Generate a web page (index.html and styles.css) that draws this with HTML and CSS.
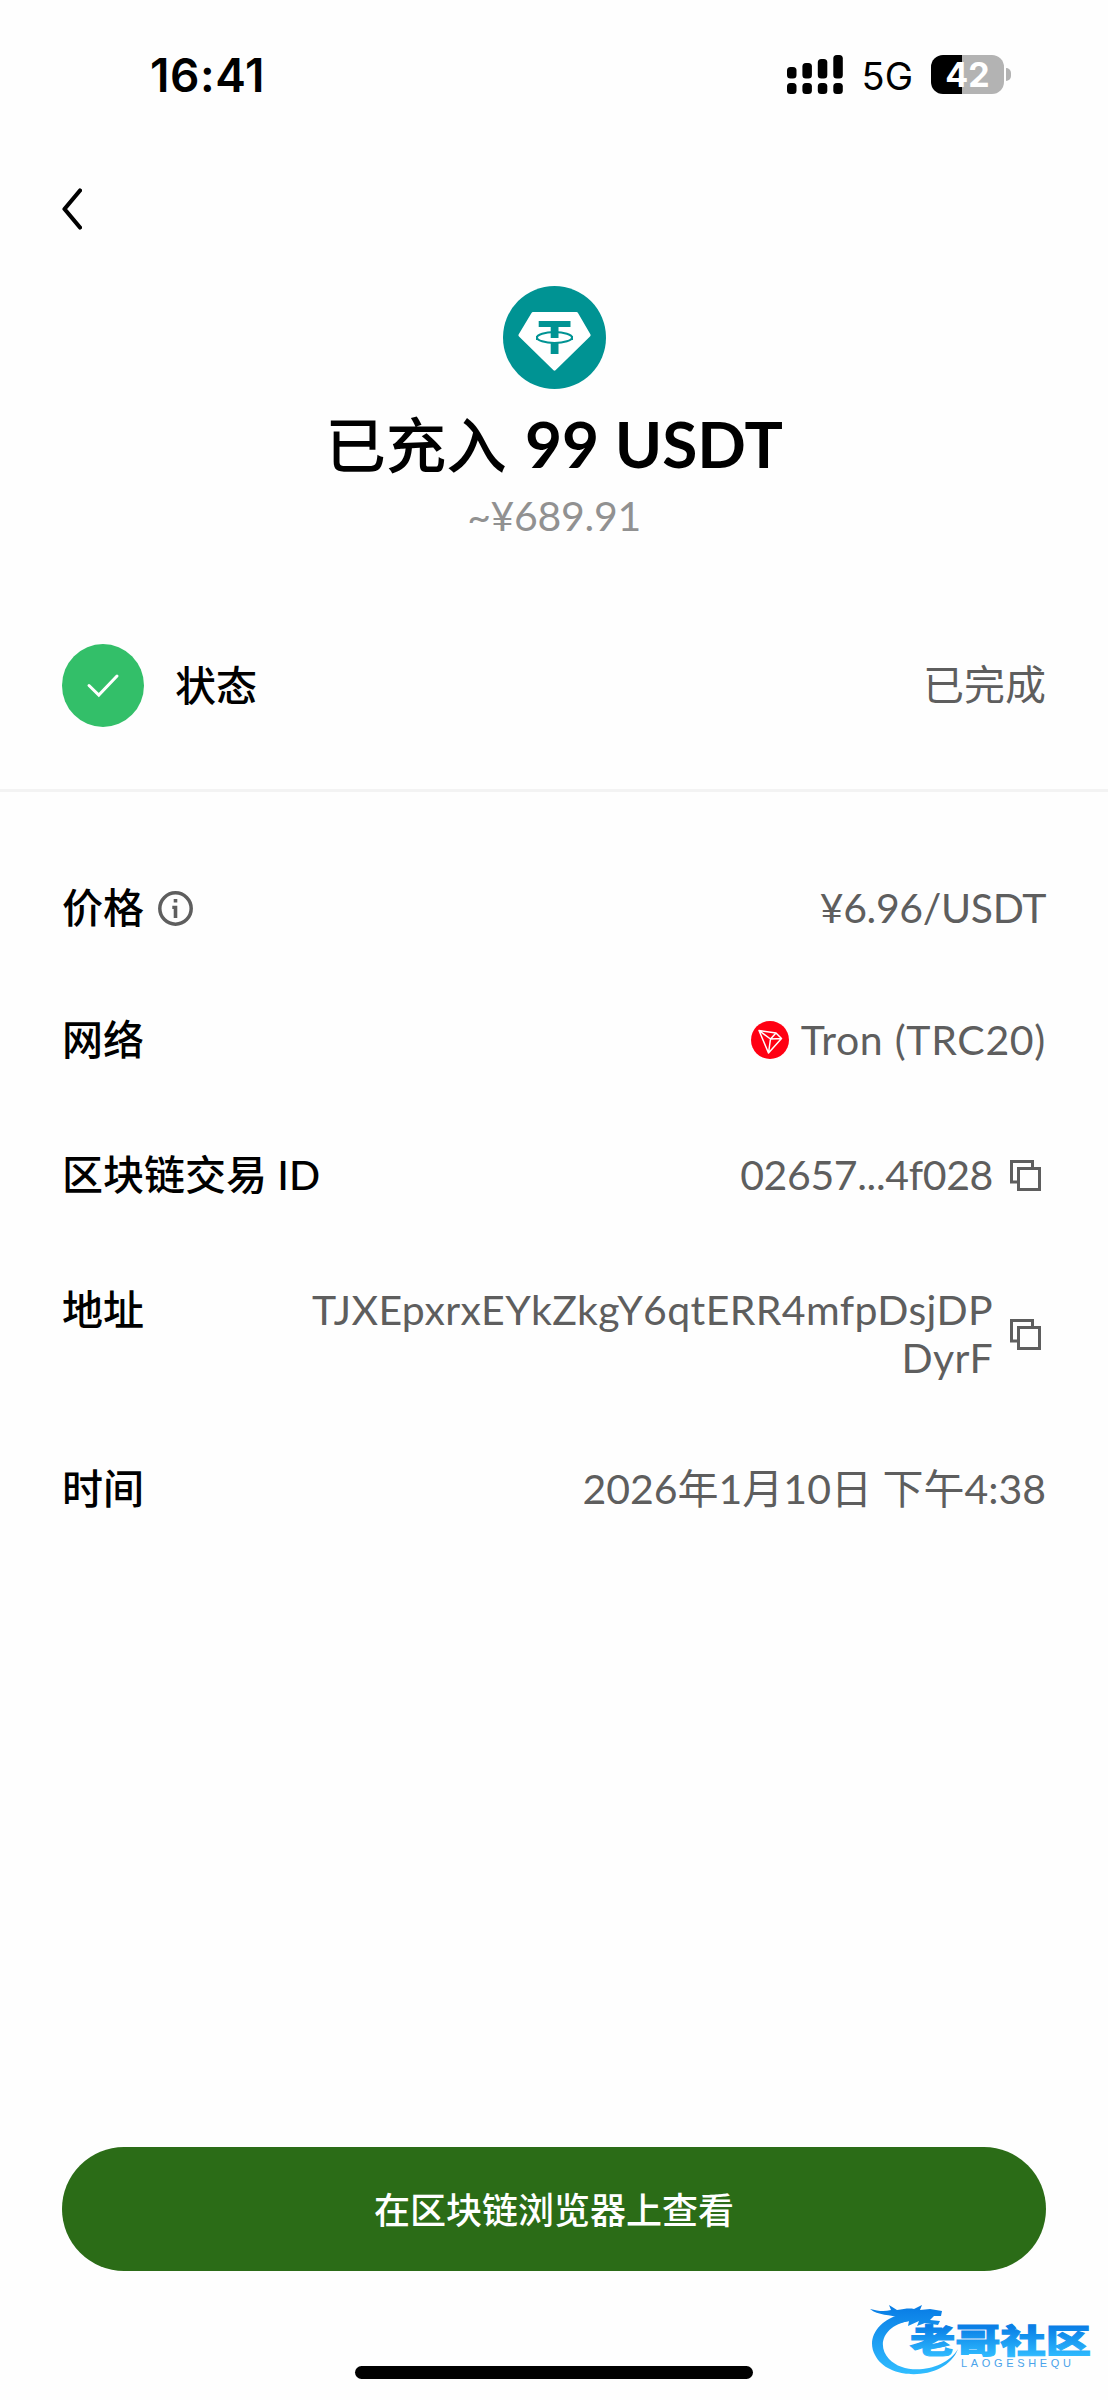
FILE: index.html
```html
<!DOCTYPE html>
<html lang="zh-CN">
<head>
  <meta charset="UTF-8">
  <meta name="viewport" content="width=device-width, initial-scale=1">
  <title>已充入 99 USDT</title>
  <link rel="stylesheet" href="styles.css">
</head>
<body>

  <div class="status-bar">
    <span class="time">16:41</span>
    <div class="status-icons">
      <svg class="signal" width="56" height="39" viewBox="0 0 56 39">
        <rect x="0" y="12" width="9.5" height="11.5" rx="3.5"/>
        <rect x="15.4" y="8" width="9.5" height="15.5" rx="3.5"/>
        <rect x="30.8" y="4" width="9.5" height="19.5" rx="3.5"/>
        <rect x="46.3" y="0" width="9.5" height="23.5" rx="3.5"/>
        <rect x="0" y="28" width="9.5" height="11" rx="3.5"/>
        <rect x="15.4" y="28" width="9.5" height="11" rx="3.5"/>
        <rect x="30.8" y="28" width="9.5" height="11" rx="3.5"/>
        <rect x="46.3" y="28" width="9.5" height="11" rx="3.5"/>
      </svg>
      <span class="network-type">5G</span>
      <div class="battery">
        <div class="battery-body">42</div>
        <div class="battery-cap"></div>
      </div>
    </div>
  </div>

  <div class="nav">
    <svg class="back" width="20" height="42" viewBox="0 0 20 42">
      <path d="M18 2.5 L2.5 21 L18 39.5" fill="none" stroke="#000" stroke-width="4.2" stroke-linecap="round" stroke-linejoin="round"/>
    </svg>
  </div>

  <div class="summary">
    <svg class="coin" width="103" height="103" viewBox="0 0 103 103">
      <circle cx="51.5" cy="51.5" r="51.5" fill="#009393"/>
      <path d="M30 26 H73.5 Q74.5 26 75 27 L87.5 48.5 Q88 49.5 87 50.5 L52.5 84.3 Q51.5 85.2 50.5 84.3 L16 50.5 Q15 49.5 15.6 48.5 L28.5 27 Q29 26 30 26 Z" fill="#fff"/>
      <ellipse cx="51.5" cy="51.5" rx="17.5" ry="5.4" fill="none" stroke="#009393" stroke-width="2"/>
      <path d="M34 50 V54 M69 50 V54" stroke="#009393" stroke-width="2"/>
      <path d="M35.7 35 H67.5 V41 H55.5 V52 H47.7 V41 H35.7 Z" fill="#009393"/>
      <path d="M47.7 57 H55.5 V68 H47.7 Z" fill="#009393"/>
      <path d="M47 53.3 H56" stroke="#fff" stroke-width="2"/>
    </svg>
    <h1>已充入 <span class="amount">99 USDT</span></h1>
    <p class="fiat">~¥689.91</p>
  </div>

  <div class="state">
    <svg class="check" width="82" height="83" viewBox="0 0 82 83">
      <ellipse cx="41" cy="41.5" rx="41" ry="41.5" fill="#33bf69"/>
      <path d="M27 41.5 L36.8 51 L55 32" fill="none" stroke="#fff" stroke-width="3" stroke-linecap="round"/>
    </svg>
    <span class="label">状态</span>
    <span class="value">已完成</span>
  </div>

  <div class="details">
    <div class="row price">
      <span class="label">价格</span>
      <svg class="info" width="35" height="35" viewBox="0 0 35 35">
        <circle cx="17.5" cy="17.5" r="15.7" fill="none" stroke="#5e5e5e" stroke-width="3.5"/>
        <path d="M15.7 8 H19.3 V11.6 H15.7 Z M14.3 14.8 H19.3 V27 H15.7 V18 H14.3 Z" fill="#5e5e5e"/>
      </svg>
      <span class="value">¥6.96/USDT</span>
    </div>
    <div class="row network">
      <span class="label">网络</span>
      <span class="value">
        <svg class="tron" width="38" height="38" viewBox="0 0 38 38">
          <circle cx="19" cy="19" r="19" fill="#ff0013"/>
          <path d="M8 9.5 L25 12 L30.5 17.5 L17.5 32 Z M8 9.5 L19.5 18 L25 12 M19.5 18 L30.5 17.5 M19.5 18 L17.5 32" fill="none" stroke="#fff" stroke-width="1.5" stroke-linejoin="round"/>
        </svg>
        <span class="chain">Tron (TRC20)</span>
      </span>
    </div>
    <div class="row txid">
      <span class="label">区块链交易 ID</span>
      <span class="value">02657...4f028</span>
      <svg class="copy" width="31" height="31" viewBox="0 0 31 31">
        <path d="M7 22 H1.5 V1.5 H22.5 V7 M8.5 8.5 H29.5 V29.5 H8.5 Z" fill="none" stroke="#5e5e5e" stroke-width="3"/>
      </svg>
    </div>
    <div class="row address">
      <span class="label">地址</span>
      <span class="value">TJXEpxrxEYkZkgY6qtERR4mfpDsjDP<br>DyrF</span>
      <svg class="copy" width="31" height="31" viewBox="0 0 31 31">
        <path d="M7 22 H1.5 V1.5 H22.5 V7 M8.5 8.5 H29.5 V29.5 H8.5 Z" fill="none" stroke="#5e5e5e" stroke-width="3"/>
      </svg>
    </div>
    <div class="row date">
      <span class="label">时间</span>
      <span class="value">2026年1月10日 下午4:38</span>
    </div>
  </div>

  <div class="footer">
    <button type="button">在区块链浏览器上查看</button>
    <div class="home-bar"></div>
  </div>

  <svg class="watermark" width="238" height="90" viewBox="0 0 238 90">
    <defs>
      <linearGradient id="blue" gradientUnits="userSpaceOnUse" x1="0" y1="12" x2="0" y2="76">
        <stop offset="0" stop-color="#0a7fe6"/>
        <stop offset="1" stop-color="#2fbcff"/>
      </linearGradient>
      <linearGradient id="name" gradientUnits="userSpaceOnUse" x1="0" y1="30" x2="0" y2="60">
        <stop offset="0" stop-color="#0a7fe6"/>
        <stop offset="1" stop-color="#2fbcff"/>
      </linearGradient>
    </defs>
    <path d="M33 17 C8 22 -4 42 5 58 C18 85 76 84 88 52 C76 73 36 80 19 62 C6 48 14 28 40 24 Z" fill="url(#blue)"/>
    <path d="M0 12 C8 14 14 15 21 13 L19 8 L27 13 C34 12 39 11 44 12 L52 8 L50 13 L60 12 L72 14 L71 19 L64 19 L60 23 L70 24 L68 28 L55 26 L47 29 L49 24 L38 29 L39 24 L25 27 L31 21 C20 17 8 19 0 12 Z" fill="url(#blue)"/>
    <text class="wm-name" x="40" y="56" textLength="181" lengthAdjust="spacingAndGlyphs" fill="url(#name)" stroke="url(#name)">老哥社区</text>
    <text class="wm-latin" x="91" y="70" textLength="110">LAOGESHEQU</text>
  </svg>

</body>
</html>
```
FILE: styles.css
```css
* {
  box-sizing: border-box;
}

body {
  margin: 0;
  height: 2400px;
  display: flex;
  flex-direction: column;
  background: #fefefe;
  color: #000;
  font-family: Lato, "Noto Sans CJK SC", sans-serif;
  font-size: 41px;
  position: relative;
}

svg {
  display: block;
  flex-shrink: 0;
}

.status-bar {
  height: 149px;
  padding: 0 97px 0 150px;
  display: flex;
  align-items: center;
  justify-content: space-between;
  font-family: Inter, sans-serif;
}

.time {
  font-size: 46px;
  font-weight: 600;
  letter-spacing: 0.6px;
}

.status-icons {
  display: flex;
  align-items: center;
}

.network-type {
  font-size: 38px;
  margin: 3px 18px 0 19px;
}

.battery {
  display: flex;
  align-items: center;
  gap: 2px;
}

.battery-body {
  width: 73px;
  height: 39px;
  border-radius: 12px;
  background: linear-gradient(90deg, #000 31px, #b3b3b3 31px);
  color: #fff;
  font-size: 34px;
  font-weight: 700;
  line-height: 39px;
  text-align: center;
}

.battery-cap {
  width: 5px;
  height: 13px;
  border-radius: 0 6px 6px 0;
  background: #b3b3b3;
}

.nav {
  height: 137px;
  padding: 39px 62px 0;
}

.summary {
  height: 358px;
  display: flex;
  flex-direction: column;
  align-items: center;
}

h1 {
  margin: 10px 0 0;
  font-size: 60.5px;
  font-weight: 500;
  line-height: 90px;
}

.amount {
  margin-left: 3px;
  font-size: 64px;
  font-weight: 700;
}

.fiat {
  margin: 0;
  color: #919191;
  line-height: 52px;
  letter-spacing: -0.3px;
}

.state {
  height: 148px;
  padding: 0 62px;
  display: flex;
  align-items: flex-start;
  border-bottom: 3px solid #f3f3f3;
}

.state .label {
  margin-left: 31px;
}

.state .label,
.state .value {
  line-height: 83px;
}

.state .value {
  line-height: 81px;
}

.label {
  font-weight: 500;
  white-space: nowrap;
}

.value {
  margin-left: auto;
  color: #5e5e5e;
  text-align: right;
  white-space: nowrap;
}

.details {
  padding: 84px 62px 0;
}

.row {
  display: flex;
  align-items: center;
  line-height: 64px;
}

.price {
  height: 64px;
  margin-bottom: 68px;
}

.price .value {
  letter-spacing: -0.35px;
}

.info {
  margin-left: 14px;
}

.network {
  height: 64px;
  margin-bottom: 71px;
}

.network .value {
  display: flex;
  align-items: center;
  gap: 12px;
}

.chain {
  letter-spacing: 0.7px;
}

.txid {
  height: 64px;
  margin-bottom: 79px;
}

.txid .value {
  letter-spacing: -0.35px;
}

.copy {
  margin: 0 5px 0 17px;
}

.address {
  height: 96px;
  margin-bottom: 75px;
}

.address .label {
  align-self: flex-start;
  line-height: 48px;
}

.address .value {
  line-height: 48px;
  letter-spacing: 0.37px;
}

.footer {
  margin-top: auto;
  padding: 0 62px 21px;
  display: flex;
  flex-direction: column;
  align-items: center;
}

button {
  width: 100%;
  height: 124px;
  padding: 0 0 2px;
  border: none;
  border-radius: 62px;
  background: #2b6c17;
  color: #fff;
  font-family: "Noto Sans CJK SC", sans-serif;
  font-size: 36px;
  font-weight: 500;
  cursor: pointer;
}

.home-bar {
  width: 398px;
  height: 13px;
  margin-top: 95px;
  border-radius: 7px;
  background: #000;
}

.watermark {
  position: absolute;
  left: 870px;
  top: 2297px;
}

.wm-name {
  font-family: "Noto Sans CJK SC", sans-serif;
  font-size: 33px;
  font-weight: 900;
  stroke-width: 1px;
}

.wm-latin {
  font-family: "Liberation Sans", sans-serif;
  font-size: 11px;
  fill: #4aa3ea;
}
```
